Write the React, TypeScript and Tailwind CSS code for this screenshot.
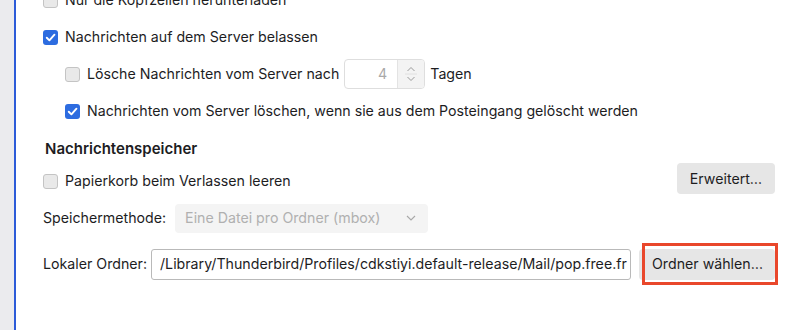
import React from "react";

function Check({ checked }: { checked?: boolean }) {
  if (checked) {
    return (
      <span className="flex h-[15px] w-[15px] shrink-0 items-center justify-center rounded-[3px] bg-[#2d6ce0]">
        <svg width="11" height="11" viewBox="0 0 10 10" fill="none">
          <path d="M1.6 5.2 L4 7.6 L8.6 2.4" stroke="white" strokeWidth="1.7" strokeLinecap="round" strokeLinejoin="round" />
        </svg>
      </span>
    );
  }
  return <span className="h-[15px] w-[15px] shrink-0 rounded-[3px] border border-[#c4c4c4] bg-[#e9e9e9]" />;
}

export default function App() {
  return (
    <div
      className="flex h-[330px] w-[800px] overflow-hidden whitespace-nowrap bg-white text-[14.2px] text-[#1d1d1f]"
      style={{ fontFamily: "Inter, 'Noto Sans', sans-serif" }}
    >
      <div className="w-[14px] shrink-0 bg-[#ebebee]" />
      <div className="w-[2px] shrink-0 bg-[#2c5bd8]" />
      <div className="flex flex-1 flex-col -mt-[18px] pl-[27px] pr-[25px]">
        <div className="flex h-[36px] items-center gap-[7px]">
          <Check />
          <span>Nur die Kopfzeilen herunterladen</span>
        </div>
        <div className="flex h-[38px] items-center gap-[7px]">
          <Check checked />
          <span>Nachrichten auf dem Server belassen</span>
        </div>
        <div className="flex h-[36px] items-center gap-[7px] pl-[22px]">
          <Check />
          <span>Lösche Nachrichten vom Server nach</span>
          <div className="ml-[-2px] flex h-[30px] w-[81px] overflow-hidden rounded-[4px] border border-[#dedede]">
            <div className="flex flex-1 items-center justify-end pr-[10px] text-[#a9a9a9]">4</div>
            <div className="flex w-[27px] flex-col items-center justify-center border-l border-[#e3e3e3] bg-[#f3f3f3]">
              <svg width="12" height="24" viewBox="0 0 12 24" fill="none">
                <path d="M2.5 9 L6 5.5 L9.5 9" stroke="#9a9a9a" strokeWidth="1" />
                <line x1="0" y1="12" x2="12" y2="12" stroke="#e0e0e0" />
                <path d="M2.5 15 L6 18.5 L9.5 15" stroke="#9a9a9a" strokeWidth="1" />
              </svg>
            </div>
          </div>
          <span className="ml-[-2px]">Tagen</span>
        </div>
        <div className="flex h-[38px] items-center gap-[7px] pl-[22px]">
          <Check checked />
          <span>Nachrichten vom Server löschen, wenn sie aus dem Posteingang gelöscht werden</span>
        </div>
        <div className="flex h-[38px] items-center pl-[2px]">
          <span className="text-[15px] font-semibold">Nachrichtenspeicher</span>
        </div>
        <div className="flex h-[26px] items-center gap-[7px]">
          <Check />
          <span>Papierkorb beim Verlassen leeren</span>
          <button className="mb-[5px] ml-auto flex h-[31px] w-[98px] items-center justify-center rounded-[4px] bg-[#e6e6e6] text-[#1d1d1f]">
            Erweitert…
          </button>
        </div>
        <div className="flex h-[48px] items-center gap-[9px]">
          <span>Speichermethode:</span>
          <div className="flex h-[29px] w-[253px] items-center justify-between rounded-[4px] bg-[#f4f4f4] pl-[10px] pr-[12px] text-[#b0b0b0]">
            <span>Eine Datei pro Ordner (mbox)</span>
            <svg width="10" height="6" viewBox="0 0 10 6" fill="none">
              <path d="M1 1 L5 5 L9 1" stroke="#a8a8a8" strokeWidth="1.1" />
            </svg>
          </div>
        </div>
        <div className="flex h-[44px] items-center">
          <span className="w-[108px] shrink-0">Lokaler Ordner:</span>
          <div className="flex h-[31px] w-[480px] shrink-0 items-center overflow-hidden rounded-[3px] border border-[#b9b9b9] pl-[8px] text-[#1d1d1f]">
            /Library/Thunderbird/Profiles/cdkstiyi.default-release/Mail/pop.free.fr
          </div>
          <div className="relative ml-[8px] shrink-0">
            <button className="flex h-[31px] w-[136px] items-center rounded-[4px] bg-[#e6e6e6] pl-[13px] text-[#1d1d1f]">
              Ordner wählen…
            </button>
            <div className="pointer-events-none absolute left-[3px] top-[-6px] h-[42px] w-[136px] border-[3px] border-[#e9472b]" />
          </div>
        </div>
      </div>
    </div>
  );
}
